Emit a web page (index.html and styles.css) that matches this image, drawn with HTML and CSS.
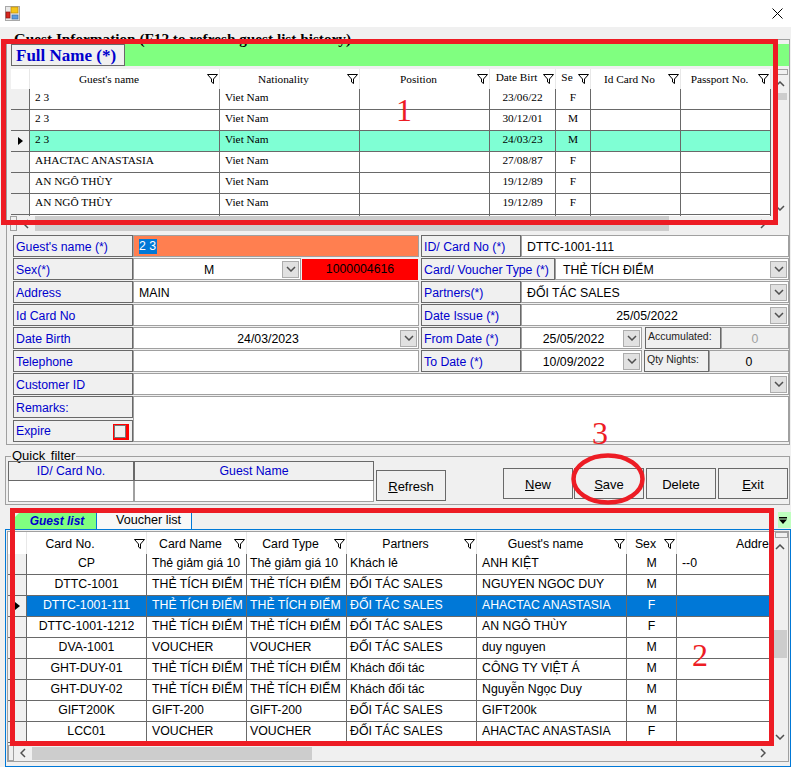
FILE: index.html
```html
<!DOCTYPE html>
<html lang="vi">
<head>
<meta charset="utf-8">
<title>Guest Information</title>
<link rel="stylesheet" href="styles.css">
</head>
<body>
<svg class="defs" width="0" height="0">
  <symbol id="funnel" viewBox="0 0 11 10"><path d="M0.5 0.5H10.5L6.5 5V9.5L4.5 8V5Z"/></symbol>
  <symbol id="down" viewBox="0 0 10 6"><path d="M1 1L5 5L9 1"/></symbol>
  <symbol id="up" viewBox="0 0 10 6"><path d="M1 5L5 1L9 5"/></symbol>
  <symbol id="left" viewBox="0 0 6 10"><path d="M5 1L1 5L5 9"/></symbol>
  <symbol id="right" viewBox="0 0 6 10"><path d="M1 1L5 5L1 9"/></symbol>
</svg>
<div class="app">
  <header class="titlebar">
    <svg class="app-icon" viewBox="0 0 15 15" width="15" height="15">
      <rect x="0.5" y="0.5" width="14" height="14" fill="#e8e8e8" stroke="#a8a8a8"/>
      <rect x="6" y="1" width="7" height="6" fill="#f5c518" stroke="#b98a10" stroke-width="0.7"/>
      <rect x="1" y="6" width="4" height="6" fill="#d8261c" stroke="#8a1510" stroke-width="0.7"/>
      <rect x="7" y="9" width="6" height="4" fill="#5a9be0" stroke="#3a6ea8" stroke-width="0.7"/>
    </svg>
    <svg class="close-icon" viewBox="0 0 11 11" width="11" height="11"><path d="M0.5 0.5L10.5 10.5M10.5 0.5L0.5 10.5"/></svg>
  </header>

  <fieldset class="group guest-group">
    <legend class="guest-legend">Guest Information (F12 to refresh guest list history)</legend>
    <div class="fullname-bar"><div class="fullname-label">Full Name (*)</div></div>

    <div class="grid-panel history-panel">
      <div class="grid-view">
        <table class="data history">
          <colgroup><col class="w19"><col class="w190"><col class="w140"><col class="w130"><col class="w66"><col class="w35"><col class="w90"><col class="w90"></colgroup>
          <thead><tr>
            <th></th>
            <th><div class="h"><span class="h-wide">Guest's name</span><svg class="fn active"><use href="#funnel"/></svg></div></th>
            <th><div class="h"><span>Nationality</span><svg class="fn"><use href="#funnel"/></svg></div></th>
            <th><div class="h"><span>Position</span><svg class="fn"><use href="#funnel"/></svg></div></th>
            <th><div class="h"><span class="h-up">Date Birt</span><svg class="fn"><use href="#funnel"/></svg></div></th>
            <th><div class="h"><span class="h-up">Se</span><svg class="fn"><use href="#funnel"/></svg></div></th>
            <th><div class="h"><span>Id Card No</span><svg class="fn"><use href="#funnel"/></svg></div></th>
            <th><div class="h"><span>Passport No.</span><svg class="fn"><use href="#funnel"/></svg></div></th>
          </tr></thead>
          <tbody>
            <tr><td class="rh"></td><td>2 3</td><td>Viet Nam</td><td></td><td class="ctr">23/06/22</td><td class="ctr">F</td><td></td><td></td></tr>
            <tr><td class="rh"></td><td>2 3</td><td>Viet Nam</td><td></td><td class="ctr">30/12/01</td><td class="ctr">M</td><td></td><td></td></tr>
            <tr class="sel-aqua"><td class="rh cur"></td><td>2 3</td><td>Viet Nam</td><td></td><td class="ctr">24/03/23</td><td class="ctr">M</td><td></td><td></td></tr>
            <tr><td class="rh"></td><td>AHACTAC ANASTASIA</td><td>Viet Nam</td><td></td><td class="ctr">27/08/87</td><td class="ctr">F</td><td></td><td></td></tr>
            <tr><td class="rh"></td><td>AN NGÔ THÙY</td><td>Viet Nam</td><td></td><td class="ctr">19/12/89</td><td class="ctr">F</td><td></td><td></td></tr>
            <tr><td class="rh"></td><td>AN NGÔ THÙY</td><td>Viet Nam</td><td></td><td class="ctr">19/12/89</td><td class="ctr">F</td><td></td><td></td></tr>
            <tr><td class="rh"></td><td></td><td></td><td></td><td></td><td></td><td></td><td></td></tr>
          </tbody>
        </table>
      </div>
      <div class="vbar">
        <div class="grip-v"></div>
        <div class="arrow-v"><svg class="chev-v"><use href="#up"/></svg></div>
        <div class="track-v"><div class="thumb thumb-v1"></div></div>
        <div class="arrow-v"><svg class="chev-v"><use href="#down"/></svg></div>
      </div>
      <div class="hbar">
        <div class="grip-h g1"></div>
        <div class="arrow-h"><svg class="chev-h"><use href="#left"/></svg></div>
        <div class="track-h"><div class="thumb thumb-h1"></div></div>
        <div class="arrow-h"><svg class="chev-h"><use href="#right"/></svg></div>
      </div>
    </div>

    <div class="form">
      <div class="field"><label class="lbl">Guest's name (*)</label><div class="ctl ctl-orange"><span class="selected">2 3</span></div></div>
      <div class="right-cell"><label class="lbl lbl-r">ID/ Card No (*)</label><div class="ctl grow">DTTC-1001-111</div></div>

      <div class="field"><label class="lbl">Sex(*)</label><div class="ctl sex-ctl"><span class="val-c">M</span><div class="combo-btn"><svg class="chev"><use href="#down"/></svg></div></div><div class="red-code">1000004616</div></div>
      <div class="right-cell"><label class="lbl lbl-card">Card/ Voucher Type (*)</label><div class="ctl grow card-ctl"><span class="val-l">THẺ TÍCH ĐIỂM</span><div class="combo-btn"><svg class="chev"><use href="#down"/></svg></div></div></div>

      <div class="field"><label class="lbl">Address</label><div class="ctl">MAIN</div></div>
      <div class="right-cell"><label class="lbl lbl-r">Partners(*)</label><div class="ctl grow"><span class="val-l">ĐỐI TÁC SALES</span><div class="combo-btn"><svg class="chev"><use href="#down"/></svg></div></div></div>

      <div class="field"><label class="lbl">Id Card No</label><div class="ctl"></div></div>
      <div class="right-cell"><label class="lbl lbl-r">Date Issue (*)</label><div class="ctl grow"><span class="val-c">25/05/2022</span><div class="combo-btn"><svg class="chev"><use href="#down"/></svg></div></div></div>

      <div class="field"><label class="lbl">Date Birth</label><div class="ctl"><span class="val-c">24/03/2023</span><div class="combo-btn"><svg class="chev"><use href="#down"/></svg></div></div></div>
      <div class="right-cell">
        <label class="lbl lbl-r">From Date (*)</label>
        <div class="ctl date-ctl"><span class="val-c">25/05/2022</span><div class="combo-btn"><svg class="chev"><use href="#down"/></svg></div></div>
        <label class="lbl lbl-small acc">Accumulated:</label>
        <div class="ctl ctl-off grow muted">0</div>
      </div>

      <div class="field"><label class="lbl">Telephone</label><div class="ctl"></div></div>
      <div class="right-cell">
        <label class="lbl lbl-r">To Date (*)</label>
        <div class="ctl date-ctl"><span class="val-c">10/09/2022</span><div class="combo-btn"><svg class="chev"><use href="#down"/></svg></div></div>
        <label class="lbl lbl-small qty">Qty Nights:</label>
        <div class="ctl ctl-off grow">0</div>
      </div>

      <div class="field wide"><label class="lbl">Customer ID</label><div class="ctl"><span class="val-l"></span><div class="combo-btn"><svg class="chev"><use href="#down"/></svg></div></div></div>

      <label class="lbl remarks-lbl">Remarks:</label>
      <div class="ctl remarks"></div>
      <label class="lbl expire-lbl">Expire<span class="check-mark"><span class="check"></span></span></label>
    </div>
  </fieldset>

  <fieldset class="group quick-group">
    <legend class="quick-legend">Quick filter</legend>
    <div class="quick-row">
      <div class="quick-table">
        <div class="q-head">ID/ Card No.</div>
        <div class="q-head">Guest Name</div>
        <div class="q-cell"></div>
        <div class="q-cell"></div>
      </div>
      <button class="btn btn-refresh"><u>R</u>efresh</button>
      <div class="actions">
        <button class="btn"><u>N</u>ew</button>
        <button class="btn"><u>S</u>ave</button>
        <button class="btn">Delete</button>
        <button class="btn"><u>E</u>xit</button>
      </div>
    </div>
  </fieldset>

  <div class="tabstrip">
    <div class="tab tab-on">Guest list</div>
    <div class="tab tab-off">Voucher list</div>
    <div class="tab-menu"><svg viewBox="0 0 8 7" width="8" height="7"><path d="M0 0H8V1.500H0ZM0 2.500H8L4 7Z"/></svg></div>
  </div>
  <div class="tabpage">
    <div class="grid-panel list-panel">
      <div class="grid-view">
        <table class="data list">
          <colgroup><col class="w19"><col class="w120"><col class="w100"><col class="w100"><col class="w130"><col class="w150"><col class="w50"><col class="w176"></colgroup>
          <thead><tr>
            <th></th>
            <th><div class="h"><span class="h-card">Card No.</span><svg class="fn"><use href="#funnel"/></svg></div></th>
            <th><div class="h"><span>Card Name</span><svg class="fn"><use href="#funnel"/></svg></div></th>
            <th><div class="h"><span>Card Type</span><svg class="fn"><use href="#funnel"/></svg></div></th>
            <th><div class="h"><span>Partners</span><svg class="fn"><use href="#funnel"/></svg></div></th>
            <th><div class="h"><span>Guest's name</span><svg class="fn"><use href="#funnel"/></svg></div></th>
            <th><div class="h"><span>Sex</span><svg class="fn"><use href="#funnel"/></svg></div></th>
            <th><div class="h"><span>Address</span><svg class="fn"><use href="#funnel"/></svg></div></th>
          </tr></thead>
          <tbody>
            <tr><td class="rh"></td><td class="ctr">CP</td><td>Thẻ giảm giá 10</td><td>Thẻ giảm giá 10</td><td>Khách lẻ</td><td>ANH KIỆT</td><td class="ctr">M</td><td>--0</td></tr>
            <tr><td class="rh"></td><td class="ctr">DTTC-1001</td><td>THẺ TÍCH ĐIỂM</td><td>THẺ TÍCH ĐIỂM</td><td>ĐỐI TÁC SALES</td><td>NGUYEN NGOC DUY</td><td class="ctr">M</td><td></td></tr>
            <tr class="sel-blue"><td class="rh cur"></td><td class="ctr">DTTC-1001-111</td><td>THẺ TÍCH ĐIỂM</td><td>THẺ TÍCH ĐIỂM</td><td>ĐỐI TÁC SALES</td><td>AHACTAC ANASTASIA</td><td class="ctr">F</td><td></td></tr>
            <tr><td class="rh"></td><td class="ctr">DTTC-1001-1212</td><td>THẺ TÍCH ĐIỂM</td><td>THẺ TÍCH ĐIỂM</td><td>ĐỐI TÁC SALES</td><td>AN NGÔ THÙY</td><td class="ctr">F</td><td></td></tr>
            <tr><td class="rh"></td><td class="ctr">DVA-1001</td><td>VOUCHER</td><td>VOUCHER</td><td>ĐỐI TÁC SALES</td><td>duy nguyen</td><td class="ctr">M</td><td></td></tr>
            <tr><td class="rh"></td><td class="ctr">GHT-DUY-01</td><td>THẺ TÍCH ĐIỂM</td><td>THẺ TÍCH ĐIỂM</td><td>Khách đối tác</td><td>CÔNG TY VIỆT Á</td><td class="ctr">M</td><td></td></tr>
            <tr><td class="rh"></td><td class="ctr">GHT-DUY-02</td><td>THẺ TÍCH ĐIỂM</td><td>THẺ TÍCH ĐIỂM</td><td>Khách đối tác</td><td>Nguyễn Ngọc Duy</td><td class="ctr">M</td><td></td></tr>
            <tr><td class="rh"></td><td class="ctr">GIFT200K</td><td>GIFT-200</td><td>GIFT-200</td><td>ĐỐI TÁC SALES</td><td>GIFT200k</td><td class="ctr">M</td><td></td></tr>
            <tr><td class="rh"></td><td class="ctr">LCC01</td><td>VOUCHER</td><td>VOUCHER</td><td>ĐỐI TÁC SALES</td><td>AHACTAC ANASTASIA</td><td class="ctr">F</td><td></td></tr>
          </tbody>
        </table>
      </div>
      <div class="vbar">
        <div class="grip-v"></div>
        <div class="arrow-v"><svg class="chev-v"><use href="#up"/></svg></div>
        <div class="track-v"><div class="thumb thumb-v2"></div></div>
        <div class="arrow-v"><svg class="chev-v"><use href="#down"/></svg></div>
      </div>
      <div class="hbar">
        <div class="grip-h g2"></div>
        <div class="arrow-h"><svg class="chev-h"><use href="#left"/></svg></div>
        <div class="track-h"><div class="thumb thumb-h2"></div></div>
        <div class="arrow-h"><svg class="chev-h"><use href="#right"/></svg></div>
      </div>
    </div>
  </div>

  <div class="mark box-1"></div>
  <div class="mark box-2"></div>
  <svg class="mark ring" viewBox="0 0 74 52" width="74" height="52"><ellipse cx="37" cy="26" rx="34.500" ry="23.500"/></svg>
  <span class="mark num num-1">1</span>
  <span class="mark num num-2">2</span>
  <span class="mark num num-3">3</span>
</div>
</body>
</html>
```
FILE: styles.css
```css
* { box-sizing: border-box; }
html, body { margin: 0; padding: 0; background: #f0f0f0; }
.defs { position: absolute; }
.app {
  position: relative;
  width: 791px;
  height: 767px;
  overflow: hidden;
  background: #f0f0f0;
  font-family: "Liberation Sans", Arial, sans-serif;
  font-size: 12.300px;
  color: #000;
}

/* title bar */
.titlebar {
  height: 27px;
  background: #fff;
  display: flex;
  align-items: flex-start;
  justify-content: space-between;
  padding: 6px 8px 0 5px;
}
.close-icon { margin-top: 2px; }
.close-icon path { stroke: #000; stroke-width: 1; fill: none; }

/* group boxes */
.group {
  border: 1px solid #a0a0a0;
  min-width: 0;
}
.guest-group {
  margin: 7px 1px 0 6px;
  padding: 0 0 1px 4px;
  height: 411px;
}
.guest-legend {
  padding: 0 3px;
  height: 10px;
  font: bold 15.250px/10px "Liberation Serif", "Times New Roman", serif;
  white-space: nowrap;
}

/* full name bar */
.fullname-bar {
  height: 22px;
  background: #80ff80;
}
.fullname-label {
  width: 114px;
  height: 22px;
  padding-left: 4px;
  border: 1px solid #696969;
  background: #f0f0f0;
  color: #0000cd;
  font: bold 17px/21px "Liberation Serif", "Times New Roman", serif;
  white-space: nowrap;
}

/* grids */
.grid-panel { display: grid; }
.history-panel {
  margin: 3px 0 0 -1px;
  grid-template-columns: 762px 16px;
  grid-template-rows: 147px 15px;
}
.list-panel {
  grid-template-columns: 764px 16px;
  grid-template-rows: 213px 16px;
}
.grid-view { overflow: hidden; background: #f0f0f0; }
.history-panel .grid-view { padding-left: 1px; }
.data {
  table-layout: fixed;
  border-collapse: separate;
  border-spacing: 0;
  color: #000;
}
.history { width: 760px; font: 11.300px "Liberation Serif", "Times New Roman", serif; background: #fff; }
.list { width: 845px; font: 12.300px "Liberation Sans", Arial, sans-serif; background: #fff; }
.w19 { width: 19px; } .w35 { width: 35px; } .w50 { width: 50px; } .w66 { width: 66px; }
.w90 { width: 90px; } .w100 { width: 100px; } .w120 { width: 120px; } .w130 { width: 130px; }
.w140 { width: 140px; } .w150 { width: 150px; } .w176 { width: 176px; } .w190 { width: 190px; }
.data th {
  padding: 0;
  font-weight: normal;
  background: #fff;
  border-right: 1px solid #e8e8e8;
}
.history th { height: 20px; }
.list th { height: 22px; padding-top: 1px; }
.h { display: flex; align-items: center; padding-right: 1px; }
.h span { flex: 1; text-align: center; white-space: nowrap; }
.h-wide { margin-right: 19px; }
.h-card { margin-right: 21px; }
.h-up { position: relative; top: -2px; }
.fn { width: 11px; height: 10px; flex: none; }
.fn use, .fn { fill: none; stroke: #000; stroke-width: 1; }
.fn.active { fill: #0000ff; stroke: #0000ff; }
.data td {
  height: 21px;
  padding: 0 0 3px 5px;
  border-right: 1px solid #696969;
  border-bottom: 1px solid #696969;
  white-space: nowrap;
  overflow: hidden;
}
.history td { padding-bottom: 5px; }
.list td:nth-child(4), .list td:nth-child(5) { padding-left: 3px; }
.data td.ctr { padding-left: 0; text-align: center; }
.data td.rh { padding: 0; background: #f0f0f0; position: relative; }
.cur::before {
  content: "";
  position: absolute;
  left: 7px;
  top: 6px;
  border-left: 5px solid #000;
  border-top: 4.5px solid transparent;
  border-bottom: 4.5px solid transparent;
}
.sel-aqua td { background: #7fffd4; }
.sel-blue td { background: #0078d7; color: #fff; }

/* scrollbars */
.vbar { display: flex; flex-direction: column; background: #f0f0f0; }
.grip-v { height: 6px; margin: 0 0 0 3px; border: 1px solid #a0a0a0; background: #f0f0f0; }
.arrow-v { height: 17px; display: flex; align-items: center; justify-content: center; }
.track-v { flex: 1; padding: 0 1px; }
.thumb { background: #cdcdcd; }
.thumb-v1 { height: 7px; margin-top: 1px; }
.thumb-v2 { height: 28px; margin-top: 75px; }
.chev-v { width: 10px; height: 6px; }
.chev-h { width: 6px; height: 10px; }
.chev { width: 10px; height: 6px; }
.chev, .chev-v, .chev-h { fill: none; stroke: #505050; stroke-width: 1.5; }
.hbar { grid-column: 1; display: flex; background: #f0f0f0; }
.grip-h { border: 1px solid #a0a0a0; }
.grip-h.g1 { width: 7px; }
.grip-h.g2 { width: 6px; }
.arrow-h { width: 18px; flex: none; display: flex; align-items: center; justify-content: center; }
.track-h { flex: 1; }
.thumb-h1 { width: 634px; height: 100%; }
.thumb-h2 { width: 280px; height: 13px; margin-top: 2px; }

/* form */
.form {
  margin: 4px 0 0 2px;
  display: grid;
  grid-template-columns: 120px 286px 370px;
  grid-auto-rows: 22px;
  row-gap: 1px;
}
.field { display: flex; min-width: 0; grid-column: 1 / span 2; }
.field.wide { grid-column: 1 / -1; }
.right-cell { display: flex; margin-left: 2px; min-width: 0; }
.lbl {
  flex: none;
  width: 120px;
  height: 22px;
  border: 1px solid #696969;
  background: #f0f0f0;
  color: #0000cd;
  line-height: 22px;
  padding-left: 2px;
  white-space: nowrap;
}
.lbl-r { width: 100px; }
.lbl-card { width: 134px; }
.lbl-small { font-size: 10.500px; line-height: 17px; color: #222; padding-left: 2px; }
.acc { width: 76px; margin-left: 3px; }
.qty { width: 65px; margin-left: 2px; }
.ctl {
  flex: 1;
  min-width: 0;
  height: 22px;
  background: #fff;
  border: 1px solid #a0a0a0;
  display: flex;
  align-items: center;
  padding: 1px 0 0 5px;
  white-space: nowrap;
}
.card-ctl { padding-left: 7px; }
.grow { flex: 1; }
.ctl-orange { background: #ff7f50; }
.selected { background: #0078d7; color: #fff; line-height: 15px; padding: 0 1px 0 0; }
.val-c { flex: 1; text-align: center; padding-right: 3px; }
.val-l { flex: 1; }
.combo-btn {
  flex: none;
  width: 17px;
  height: 17px;
  margin: -1px 1px 0 0;
  background: #e1e1e1;
  border: 1px solid #adadad;
  display: flex;
  align-items: center;
  justify-content: center;
}
.sex-ctl { flex: none; width: 168px; margin-right: 1px; }
.red-code {
  flex: 1;
  height: 21px;
  margin: 1px 1px 0 0;
  background: #f00;
  text-align: center;
  line-height: 21px;
}
.date-ctl { flex: none; width: 121px; }
.ctl-off { background: #f0f0f0; justify-content: center; padding: 1px 0 0; }
.muted { color: #a0a0a0; }
.remarks-lbl { grid-column: 1; grid-row: 8; }
.remarks { grid-column: 2 / -1; grid-row: 8 / span 2; height: 46px; }
.expire-lbl {
  grid-column: 1;
  grid-row: 9;
  margin-top: 1px;
  display: flex;
  align-items: center;
  justify-content: space-between;
  padding-right: 3px;
}
.check-mark {
  width: 16px;
  height: 16px;
  border-style: solid;
  border-color: #f00;
  border-width: 1px 3px 2px 1px;
  margin-top: 1px;
}
.check { display: block; width: 12px; height: 13px; border: 1px solid #777; background: #f0f0f0; }

/* quick filter */
.quick-group {
  margin: 6px 1px 0 5px;
  padding: 0 0 2px 2px;
  height: 54px;
}
.quick-legend {
  margin-left: 3px;
  padding: 0 1px;
  height: 10px;
  font: 13px/10px "Liberation Sans", Arial, sans-serif;
  word-spacing: 2px;
}
.quick-row { display: flex; align-items: flex-start; }
.quick-table {
  flex: none;
  width: 366px;
  display: grid;
  grid-template-columns: 126px 240px;
  grid-template-rows: 20px 21px;
}
.q-head {
  border: 1px solid #696969;
  color: #0000cd;
  text-align: center;
  line-height: 18px;
}
.q-cell { background: #fff; border: 1px solid #a0a0a0; border-top: 0; }
.btn {
  width: 70px;
  height: 31px;
  padding: 2px 0 0;
  border: 1px solid #696969;
  background: #f0f0f0;
  color: #000;
  font: 13px "Liberation Sans", Arial, sans-serif;
}
.btn-refresh { flex: none; margin: 9px 0 0 2px; }
.actions {
  display: flex;
  margin: 7px 0 0 57px;
  gap: 2px;
}
.actions .btn:first-child { margin-right: -1px; }

/* tabs */
.tabstrip {
  margin: 7px 0 0 15px;
  height: 17px;
  display: flex;
  align-items: flex-end;
}
.tab {
  height: 17px;
  text-align: center;
  line-height: 16px;
  white-space: nowrap;
}
.tab-on {
  width: 82px;
  padding: 1px 0 0 3px;
  background: #80ff80;
  color: #0000cd;
  font-style: italic;
  font-weight: bold;
  font-size: 12px;
  border-right: 1px solid #0078d7;
  clip-path: polygon(5px 0, 100% 0, 100% 100%, 0 100%, 0 5px);
}
.tab-off {
  width: 95px;
  padding-left: 9px;
  background: #f8f8f8;
  border-right: 1px solid #0078d7;
  font-size: 12.600px;
}
.tab-menu {
  margin-left: auto;
  width: 13px;
  height: 16px;
  padding-right: 3px;
  background: #c0ffc0;
  display: flex;
  align-items: center;
  justify-content: center;
  margin-bottom: 1px;
}
.tabpage {
  margin-left: 5px;
  width: 786px;
  height: 238px;
  border: 1px solid #0078d7;
  padding: 1px 1px 4px 1px;
  background: #f0f0f0;
}
.list-panel { border: 1px solid #a0a0a0; }

/* red annotations */
.mark { position: absolute; }
.box-1 { left: 1px; top: 39px; width: 777px; height: 186px; border: 5px solid #ed1c24; }
.box-2 { left: 10px; top: 508px; width: 764px; height: 238px; border: 5px solid #ed1c24; }
.ring { left: 571px; top: 453px; }
.ring ellipse { fill: none; stroke: #ed1c24; stroke-width: 4.500; }
.num { color: #ed1c24; font: 32px/32px "Liberation Serif", "Times New Roman", serif; }
.num-1 { left: 396px; top: 94px; }
.num-2 { left: 692px; top: 639px; }
.num-3 { left: 592px; top: 417px; }
```
